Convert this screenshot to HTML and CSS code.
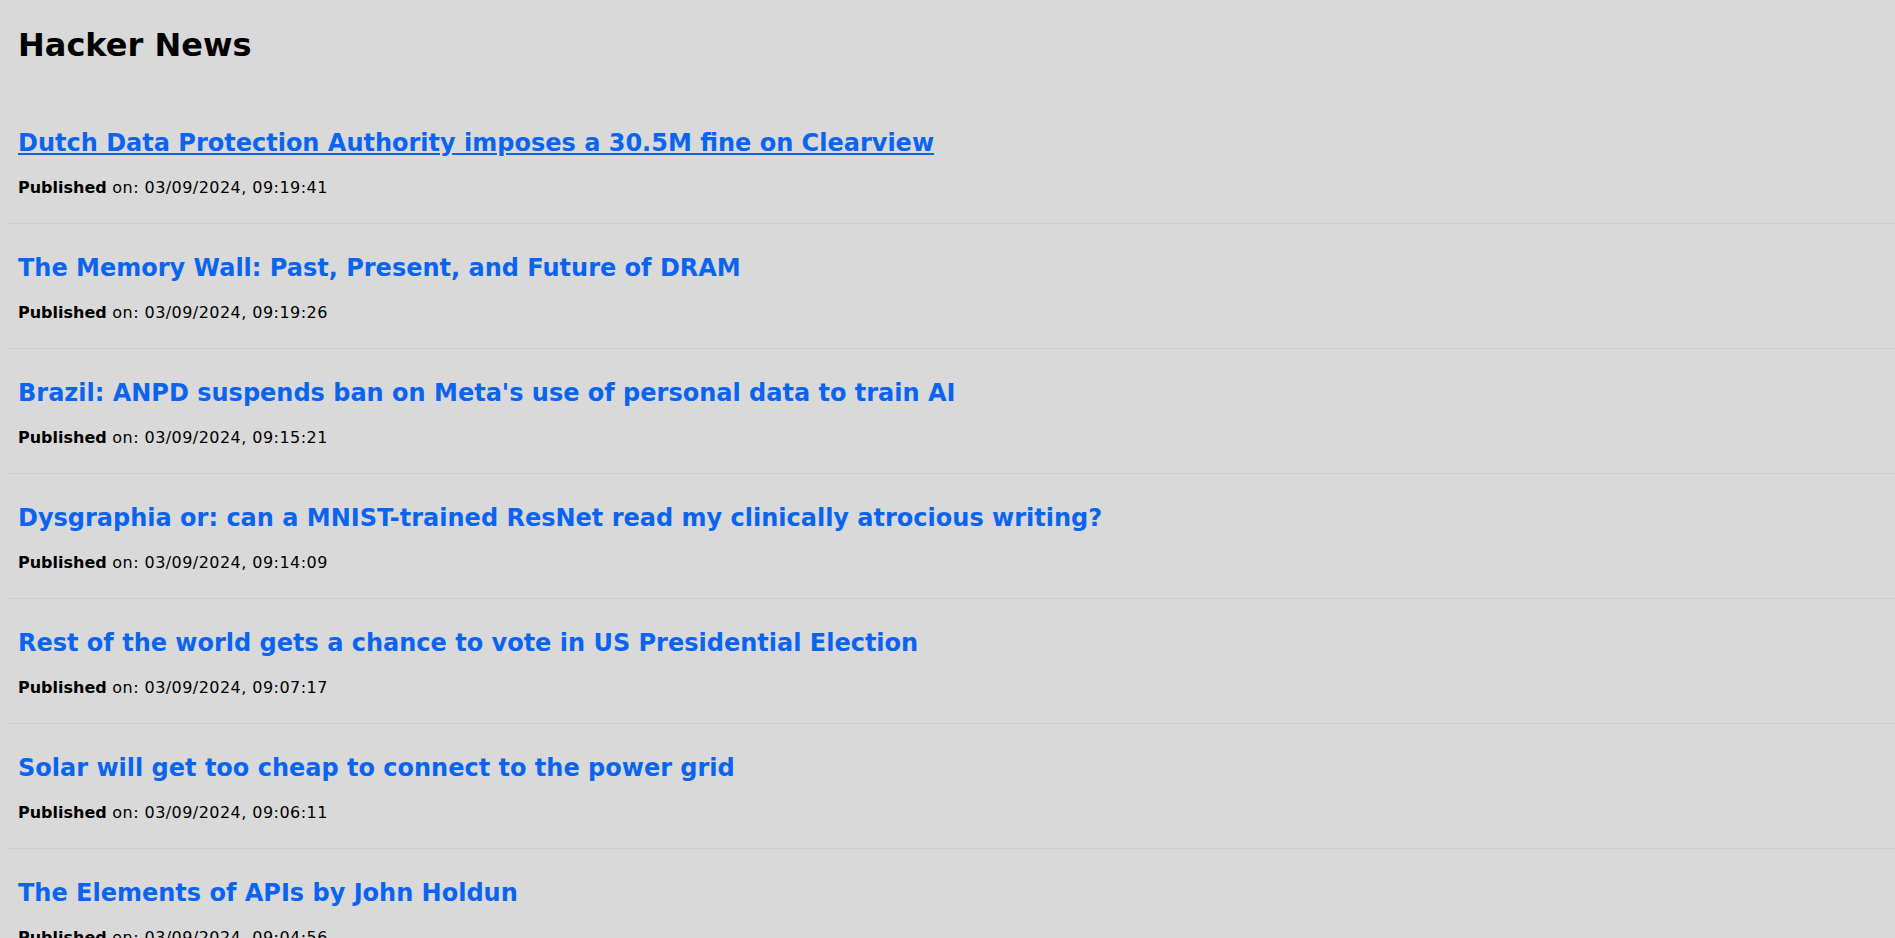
FILE: index.html
```html
<!DOCTYPE html>
<html lang="en">
<head>
<meta charset="utf-8">
<title>Hacker News</title>
<link rel="stylesheet" href="styles.css">
</head>
<body>
<h1 class="site-title">Hacker News</h1>
<ul class="feed">
  <li class="item">
    <h2 class="item-title"><a class="item-link is-active" href="#">Dutch Data Protection Authority imposes a 30.5M fine on Clearview</a></h2>
    <p class="item-meta"><strong class="meta-label">Published</strong> on: 03/09/2024, 09:19:41</p>
  </li>
  <li class="item">
    <h2 class="item-title"><a class="item-link" href="#">The Memory Wall: Past, Present, and Future of DRAM</a></h2>
    <p class="item-meta"><strong class="meta-label">Published</strong> on: 03/09/2024, 09:19:26</p>
  </li>
  <li class="item">
    <h2 class="item-title"><a class="item-link" href="#">Brazil: ANPD suspends ban on Meta's use of personal data to train AI</a></h2>
    <p class="item-meta"><strong class="meta-label">Published</strong> on: 03/09/2024, 09:15:21</p>
  </li>
  <li class="item">
    <h2 class="item-title"><a class="item-link" href="#">Dysgraphia or: can a MNIST-trained ResNet read my clinically atrocious writing?</a></h2>
    <p class="item-meta"><strong class="meta-label">Published</strong> on: 03/09/2024, 09:14:09</p>
  </li>
  <li class="item">
    <h2 class="item-title"><a class="item-link" href="#">Rest of the world gets a chance to vote in US Presidential Election</a></h2>
    <p class="item-meta"><strong class="meta-label">Published</strong> on: 03/09/2024, 09:07:17</p>
  </li>
  <li class="item">
    <h2 class="item-title"><a class="item-link" href="#">Solar will get too cheap to connect to the power grid</a></h2>
    <p class="item-meta"><strong class="meta-label">Published</strong> on: 03/09/2024, 09:06:11</p>
  </li>
  <li class="item">
    <h2 class="item-title"><a class="item-link" href="#">The Elements of APIs by John Holdun</a></h2>
    <p class="item-meta"><strong class="meta-label">Published</strong> on: 03/09/2024, 09:04:56</p>
  </li>
</ul>
</body>
</html>
```
FILE: styles.css
```css
html {
  background: #d9d9d9;
}
body {
  margin: 8px 0 8px 8px;
  background: #d9d9d9;
  color: #000;
  font-family: "DejaVu Sans", Verdana, sans-serif;
}
.site-title {
  margin: 18px 0 0;
  padding: 0 10px;
  font-size: 32px;
  line-height: 38px;
  font-weight: bold;
}
.feed {
  list-style: none;
  margin: 35px 0 0;
  padding: 0;
}
.item {
  padding: 30px 10px 26px;
  border-bottom: 1px solid #cccccc;
}
.item-title {
  margin: 0;
  font-size: 24px;
  line-height: 29px;
  font-weight: bold;
}
.item-link {
  color: #0a64f0;
  text-decoration: none;
}
.item-link.is-active {
  text-decoration: underline;
}
.item-meta {
  margin: 20px 0 0;
  font-size: 16px;
  line-height: 19px;
  letter-spacing: 0.45px;
}
.meta-label {
  letter-spacing: 0;
}
```
